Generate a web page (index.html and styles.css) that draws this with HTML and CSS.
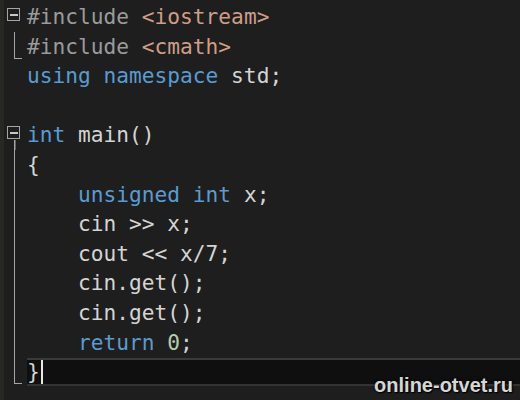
FILE: index.html
```html
<!DOCTYPE html>
<html>
<head>
<meta charset="utf-8">
<link rel="stylesheet" href="styles.css">
</head>
<body>
<div class="editor">
  <div class="strip"></div>
  <div class="code">
    <div class="line"><span class="gut fold"></span><span class="txt"><span class="pp">#include</span> <span class="str">&lt;iostream&gt;</span></span></div>
    <div class="line"><span class="gut end"></span><span class="txt"><span class="pp">#include</span> <span class="str">&lt;cmath&gt;</span></span></div>
    <div class="line"><span class="gut"></span><span class="txt"><span class="kw">using</span> <span class="kw">namespace</span> std;</span></div>
    <div class="line"><span class="gut"></span><span class="txt"></span></div>
    <div class="line"><span class="gut fold open"></span><span class="txt"><span class="kw">int</span> main()</span></div>
    <div class="line"><span class="gut bar"></span><span class="txt">{</span></div>
    <div class="line"><span class="gut bar"></span><span class="txt">    <span class="kw">unsigned</span> <span class="kw">int</span> x;</span></div>
    <div class="line"><span class="gut bar"></span><span class="txt">    cin &gt;&gt; x;</span></div>
    <div class="line"><span class="gut bar"></span><span class="txt">    cout &lt;&lt; x/7;</span></div>
    <div class="line"><span class="gut bar"></span><span class="txt">    cin.get();</span></div>
    <div class="line"><span class="gut bar"></span><span class="txt">    cin.get();</span></div>
    <div class="line"><span class="gut bar"></span><span class="txt">    <span class="kw">return</span> <span class="num">0</span>;</span></div>
    <div class="line current"><span class="gut end"></span><span class="txt">}<span class="caret"></span></span></div>
  </div>
  <div class="watermark">online-otvet.ru</div>
</div>
</body>
</html>
```
FILE: styles.css
```css
html, body {
  margin: 0;
  padding: 0;
  background: #1e1e1e;
}
.editor {
  position: relative;
  display: flex;
  width: 520px;
  height: 400px;
  overflow: hidden;
  background: #1e1e1e;
}
.strip {
  width: 4px;
  flex: none;
  background: #262923;
}
.code {
  flex: 1;
  padding-top: 2px;
  font-family: "DejaVu Sans Mono", "Liberation Mono", monospace;
  font-size: 21.2px;
  color: #d4d4d4;
}
.line {
  height: 29.6px;
  line-height: 29.6px;
  display: flex;
  position: relative;
}
.txt {
  white-space: pre;
  position: relative;
  z-index: 1;
}
.gut {
  width: 23px;
  height: 29.6px;
  flex: none;
  position: relative;
  z-index: 2;
}
.gut.fold::before {
  content: "";
  position: absolute;
  left: 3px;
  top: 6px;
  width: 11px;
  height: 11px;
  border: 1.5px solid #a5a5a5;
}
.gut.fold::after {
  content: "";
  position: absolute;
  left: 6px;
  top: 12px;
  width: 8px;
  height: 2px;
  background: #c8c8c8;
}
.gut.open {
  background: linear-gradient(#a5a5a5, #a5a5a5) no-repeat 9.5px 20px / 1.5px 10px;
}
.gut.bar::before {
  content: "";
  position: absolute;
  left: 9.5px;
  top: 0;
  width: 1.5px;
  height: 100%;
  background: #a5a5a5;
}
.gut.end::before {
  content: "";
  position: absolute;
  left: 9.5px;
  top: 0;
  width: 7px;
  height: 26px;
  border-left: 1.5px solid #a5a5a5;
  border-bottom: 1.5px solid #a5a5a5;
}
.line.current::after {
  content: "";
  position: absolute;
  left: 23px;
  right: -10px;
  top: 1px;
  height: 24px;
  background: #0f0f0f;
  border-top: 2px solid #3a3a3a;
  border-bottom: 2px solid #333333;
  z-index: 0;
}
.caret {
  display: inline-block;
  width: 2px;
  height: 24px;
  background: #e8e8e8;
  margin-left: 1px;
  vertical-align: -5px;
}
.pp { color: #9b9b9b; }
.str { color: #d09d88; }
.kw { color: #5b9bd0; }
.num { color: #b5cea8; }
.watermark {
  position: absolute;
  right: 7px;
  bottom: 3px;
  font-family: "Liberation Sans", Arial, sans-serif;
  font-weight: bold;
  font-size: 20px;
  color: #d6d6d6;
  text-shadow: 0 0 3px #000, 1px 1px 1px #000;
  z-index: 3;
}
```
